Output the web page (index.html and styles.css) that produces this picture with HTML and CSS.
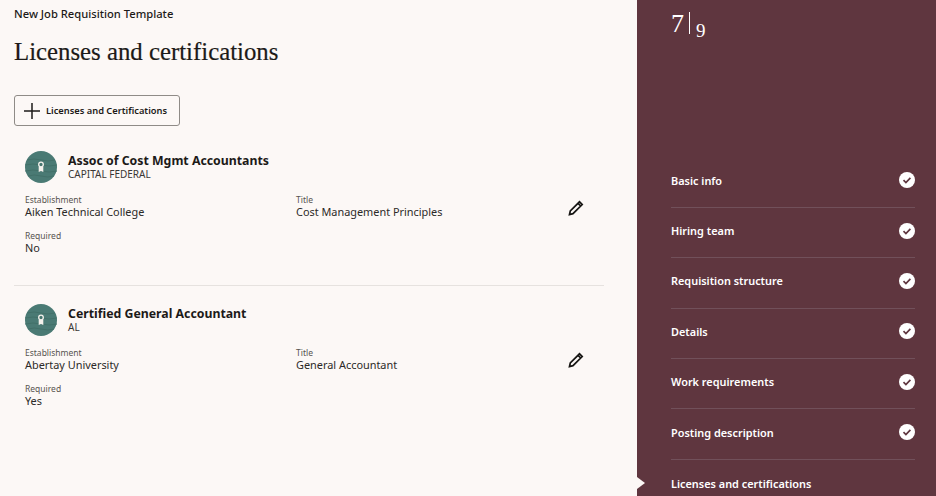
FILE: index.html
```html
<!DOCTYPE html>
<html lang="en">
	<head>
		<meta charset="UTF-8" />
		<title>Licenses and certifications</title>
		<link rel="stylesheet" href="styles.css">
	</head>
	<body>
		<svg class="defs" width="0" height="0">
			<symbol id="medal" viewBox="0 0 32 32">
				<circle cx="16" cy="16" r="16" fill="#4a7a74"/>
				<path d="M2 9q7-2 14 0t14 0M0 14q8-2 16 0t16 0M0 20q8-2 16 0t16 0M3 25q6-2 13 0t13 0" fill="none" stroke="#427069" stroke-width="1"/>
				<circle cx="16" cy="13.500" r="2.300" fill="none" stroke="#f4f1ec" stroke-width="1.300"/>
				<path d="M13.700 16v5l2.300-1 2.300 1v-5z" fill="#f4f1ec"/>
			</symbol>
			<symbol id="pencil" viewBox="0 0 16 16">
				<path d="M1.500 14.500l.8-3.500L11.500 1.800l2.700 2.700L5 13.700zM10 3.300l2.700 2.700" fill="none" stroke="#161513" stroke-width="1.700"/>
			</symbol>
			<symbol id="done" viewBox="0 0 16 16">
				<circle cx="8" cy="8" r="8" fill="#fff"/>
				<path d="M4.500 8.200l2.400 2.300 4.500-4.600" fill="none" stroke="#5f363f" stroke-width="1.700"/>
			</symbol>
		</svg>

		<main class="content">
			<div class="template-name">New Job Requisition Template</div>
			<h1>Licenses and certifications</h1>
			<button class="add-btn" type="button">
				<svg width="16" height="16" viewBox="0 0 16 16"><path d="M8 0v16M0 8h16" stroke="#1c1a18" stroke-width="1.500" fill="none"/></svg>
				Licenses and Certifications
			</button>

			<section class="card">
				<div class="card-head">
					<svg class="badge" width="32" height="32"><use href="#medal"/></svg>
					<div>
						<h2>Assoc of Cost Mgmt Accountants</h2>
						<div class="sub">CAPITAL FEDERAL</div>
					</div>
				</div>
				<div class="fields">
					<div class="field"><label>Establishment</label><div>Aiken Technical College</div></div>
					<div class="field"><label>Title</label><div>Cost Management Principles</div></div>
					<div class="field"><label>Required</label><div>No</div></div>
				</div>
				<svg class="edit" width="16" height="16"><use href="#pencil"/></svg>
			</section>

			<section class="card">
				<div class="card-head">
					<svg class="badge" width="32" height="32"><use href="#medal"/></svg>
					<div>
						<h2>Certified General Accountant</h2>
						<div class="sub">AL</div>
					</div>
				</div>
				<div class="fields">
					<div class="field"><label>Establishment</label><div>Abertay University</div></div>
					<div class="field"><label>Title</label><div>General Accountant</div></div>
					<div class="field"><label>Required</label><div>Yes</div></div>
				</div>
				<svg class="edit" width="16" height="16"><use href="#pencil"/></svg>
			</section>
		</main>

		<aside class="steps">
			<div class="counter"><span class="current">7</span><span class="bar"></span><span class="total">9</span></div>
			<ul>
				<li>Basic info<svg width="16" height="16"><use href="#done"/></svg></li>
				<li>Hiring team<svg width="16" height="16"><use href="#done"/></svg></li>
				<li>Requisition structure<svg width="16" height="16"><use href="#done"/></svg></li>
				<li>Details<svg width="16" height="16"><use href="#done"/></svg></li>
				<li>Work requirements<svg width="16" height="16"><use href="#done"/></svg></li>
				<li>Posting description<svg width="16" height="16"><use href="#done"/></svg></li>
				<li class="active">Licenses and certifications</li>
			</ul>
		</aside>
	</body>
</html>
```
FILE: styles.css
```css
* {
	box-sizing: border-box;
}
html,
body {
	height: 100%;
}
body {
	display: flex;
	margin: 0;
	overflow: hidden;
	font-family: "Noto Sans", Arial, sans-serif;
	color: #1c1a18;
	background-color: #fcf8f6;
}
.defs {
	position: absolute;
}
.content {
	width: 637px;
	flex-shrink: 0;
	padding: 7px 33px 0 14px;
}
.template-name {
	font-size: 11.200px;
	line-height: 14px;
	font-weight: 500;
}
h1 {
	margin: 15px 0 27px;
	font-family: "Liberation Serif", serif;
	font-size: 24.800px;
	line-height: 32px;
	font-weight: 400;
	-webkit-text-stroke: 0.2px #1c1a18;
}
.add-btn {
	display: flex;
	align-items: center;
	gap: 6px;
	width: 166px;
	height: 31px;
	padding: 0 0 0 9px;
	font-family: inherit;
	font-size: 9.300px;
	font-weight: 600;
	color: #1c1a18;
	background: transparent;
	border: 1px solid #8f8b87;
	border-radius: 3px;
}
.card {
	position: relative;
	padding: 25px 0 31px 11px;
	border-bottom: 1px solid #e6e2df;
}
.card:last-child {
	border-bottom: none;
	padding-top: 17.500px;
}
.card-head {
	display: flex;
	align-items: center;
	gap: 11px;
}
h2 {
	margin: 0;
	font-size: 12.300px;
	line-height: 15px;
	font-weight: 700;
}
.sub {
	font-size: 10px;
	line-height: 13px;
	color: #3a3734;
}
.fields {
	display: grid;
	grid-template-columns: 271px 1fr;
	row-gap: 12px;
	margin-top: 11px;
}
.field {
	font-size: 10.900px;
	line-height: 13px;
	color: #2c2a28;
}
.field label {
	display: block;
	font-size: 8.500px;
	line-height: 11px;
	color: #57534f;
}
.edit {
	position: absolute;
	right: 20px;
	top: 74px;
}
.card:last-child .edit {
	top: 66px;
}
.steps {
	flex: 1;
	padding: 0 21px 0 34px;
	color: #fff;
	background-color: #5f363f;
}
.counter {
	display: flex;
	align-items: flex-start;
	height: 37px;
	padding-top: 11px;
	font-family: "Liberation Serif", serif;
}
.current {
	font-size: 26px;
	line-height: 26px;
}
.bar {
	width: 1px;
	height: 22px;
	margin: 1px 6px 0 5px;
	background-color: #fff;
}
.total {
	margin-top: 10px;
	font-size: 19px;
	line-height: 20px;
}
.steps ul {
	margin: 120.500px 0 0;
	padding: 0;
	list-style: none;
}
.steps li {
	position: relative;
	display: flex;
	align-items: center;
	justify-content: space-between;
	height: 50.400px;
	padding-bottom: 4px;
	font-size: 10.900px;
	font-weight: 600;
	border-bottom: 1px solid #71505a;
}
.steps li.active {
	border-bottom: none;
}
.steps li.active::before {
	content: "";
	position: absolute;
	left: -34px;
	top: 17px;
	border-left: 8px solid #fcf8f6;
	border-top: 6.500px solid transparent;
	border-bottom: 6.500px solid transparent;
}
```
